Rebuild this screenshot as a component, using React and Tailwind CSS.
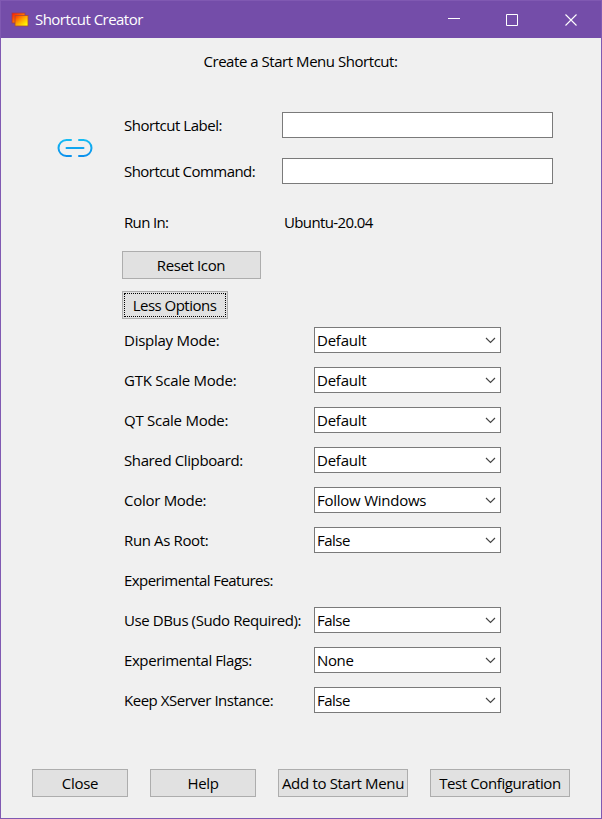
import React from "react";

const options = [
  ["Display Mode:", "Default", "tracking-[-0.25px]", "tracking-[-0.24px]"],
  ["GTK Scale Mode:", "Default", "tracking-[-0.25px]", "tracking-[-0.24px]"],
  ["QT Scale Mode:", "Default", "tracking-[-0.25px]", "tracking-[-0.24px]"],
  ["Shared Clipboard:", "Default", "tracking-[-0.38px]", "tracking-[-0.24px]"],
  ["Color Mode:", "Follow Windows", "tracking-[-0.28px]", "tracking-[-0.25px]"],
  ["Run As Root:", "False", "tracking-[-0.37px]", "tracking-[-0.5px]"],
  ["Experimental Features:", null, "tracking-[-0.56px]", ""],
  ["Use DBus (Sudo Required):", "False", "tracking-[-0.4px]", "tracking-[-0.5px]"],
  ["Experimental Flags:", "None", "tracking-[-0.41px]", "tracking-[-0.35px]"],
  ["Keep XServer Instance:", "False", "tracking-[-0.47px]", "tracking-[-0.5px]"],
];

function Button({ className, children }) {
  return (
    <button className={`flex h-7 items-center justify-center whitespace-nowrap border border-[#adadad] bg-[#e1e1e1] pb-px ${className}`}>
      {children}
    </button>
  );
}

function Select({ value, className }) {
  return (
    <div className="flex h-[26px] w-[187px] items-center justify-between border border-[#7a7a7a] bg-white pl-[2px] pr-[4px]">
      <span className={`pb-px ${className}`}>{value}</span>
      <svg width="11" height="8" viewBox="0 0 11 8" fill="none" stroke="#444" strokeWidth="1.15">
        <path d="M1 2l4.500 4.500L10 2" />
      </svg>
    </div>
  );
}

function TitleBar() {
  return (
    <header className="flex h-[37px] items-center bg-[#744da9] text-white">
      <svg className="ml-[10px]" width="18" height="15" viewBox="0 0 18 15">
        <defs>
          <linearGradient id="back" x1="0" y1="0" x2="1" y2="1">
            <stop offset="0" stopColor="#ff1800" />
            <stop offset="1" stopColor="#ffc000" />
          </linearGradient>
          <linearGradient id="front" x1="0" y1="0" x2="1" y2="1">
            <stop offset="0" stopColor="#ff3000" />
            <stop offset=".45" stopColor="#ffa000" />
            <stop offset=".9" stopColor="#ffff00" />
          </linearGradient>
        </defs>
        <rect x="1" y="1" width="13" height="10" fill="url(#back)" stroke="#9c3c50" strokeWidth=".8" />
        <rect x="4" y="3.5" width="13" height="10.5" fill="url(#front)" stroke="#a84a38" strokeWidth=".8" />
      </svg>
      <span className="ml-[6px] pb-[2px] tracking-[-0.54px]">Shortcut Creator</span>
      <svg className="ml-auto mr-[23px]" width="130" height="14" viewBox="0 0 130 14" fill="none" stroke="white">
        <path d="M0 5.500h12M58.5 1.5h11v11h-11z" />
        <path d="M117.5 1.5l11 11M128.5 1.5l-11 11" strokeWidth="1.1" />
      </svg>
    </header>
  );
}

export default function App() {
  return (
    <div className="flex h-[819px] w-[602px] flex-col border border-[#8059b2] bg-[#f0f0f0] font-['Open_Sans','Noto_Sans',sans-serif] text-[15px] leading-5 text-black">
      <TitleBar />
      <h1 className="mt-[13px] pr-px text-center tracking-[-0.46px]">Create a Start Menu Shortcut:</h1>
      <main className="mt-[41px] flex">
        <div className="w-[121px] pl-14 pt-[26px]">
          <svg width="36" height="20" viewBox="0 0 36 20" fill="none" stroke="url(#link)" strokeWidth="2" strokeLinecap="round">
            <defs>
              <linearGradient id="link" gradientUnits="userSpaceOnUse" x1="0" y1="0" x2="0" y2="20">
                <stop offset="0" stopColor="#16c0f4" />
                <stop offset="1" stopColor="#0a8cec" />
              </linearGradient>
            </defs>
            <path d="M14 2H9.500a8 8 0 0 0 0 16H14M22 2h4.500a8 8 0 0 1 0 16H22M9.500 10h17" />
          </svg>
        </div>
        <div>
          <label className="flex h-[26px] items-center pl-[2px]">
            <span className="w-[158px] pb-px tracking-[-0.47px]">Shortcut Label:</span>
            <input className="h-[26px] w-[271px] border border-[#7a7a7a] bg-white" />
          </label>
          <label className="mt-5 flex h-[26px] items-center pl-[2px]">
            <span className="w-[158px] pb-px tracking-[-0.55px]">Shortcut Command:</span>
            <input className="h-[26px] w-[271px] border border-[#7a7a7a] bg-white" />
          </label>
          <div className="mt-[28px] flex pl-[2px]">
            <span className="w-[160px] tracking-[-0.65px]">Run In:</span>
            <span className="tracking-[-0.62px]">Ubuntu-20.04</span>
          </div>
          <Button className="mt-[19px] w-[139px] pr-px tracking-[-0.38px]">Reset Icon</Button>
          <Button className="mt-3 w-[106px] pr-px tracking-[-0.52px] outline-1 -outline-offset-3 outline-dotted outline-black">Less Options</Button>
          <div className="mt-2 flex flex-col gap-[14px]">
            {options.map(([label, value, lt, vt]) => (
              <div key={label} className="flex h-[26px] items-center pl-[2px]">
                <span className={`w-[190px] whitespace-nowrap pb-px ${lt}`}>{label}</span>
                {value && <Select value={value} className={vt} />}
              </div>
            ))}
          </div>
        </div>
      </main>
      <footer className="mt-14 flex gap-[22px] pl-[31px]">
        <Button className="w-24 tracking-[-0.3px]">Close</Button>
        <Button className="w-[106px] tracking-[-0.35px]">Help</Button>
        <Button className="w-[130px] tracking-[-0.32px]">Add to Start Menu</Button>
        <Button className="w-[140px] tracking-[-0.4px]">Test Configuration</Button>
      </footer>
    </div>
  );
}
